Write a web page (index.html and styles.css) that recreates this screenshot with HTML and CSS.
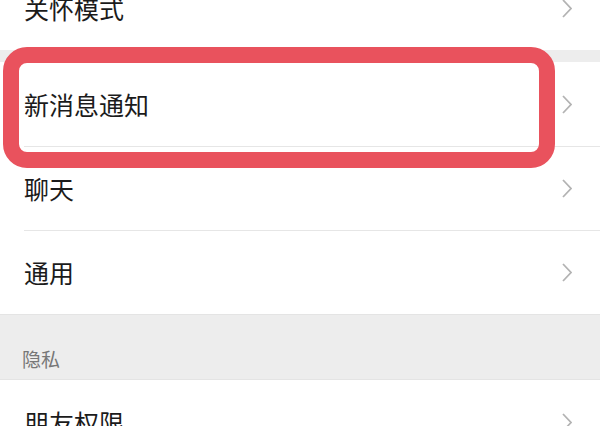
FILE: index.html
```html
<!DOCTYPE html>
<html lang="zh-CN">
<head>
    <meta charset="UTF-8">
    <meta name="viewport" content="width=device-width, initial-scale=1.0">
    <title>设置</title>
    <link rel="stylesheet" href="styles.css">
</head>
<body>
    <div class="page">
        <div class="group">
            <div class="row">
                <span class="label">关怀模式</span>
                <svg class="arrow" viewBox="0 0 10 19"><polyline points="1,1 9,9.5 1,18"/></svg>
            </div>
        </div>

        <div class="gap"></div>

        <div class="group">
            <div class="row">
                <span class="label">新消息通知</span>
                <svg class="arrow" viewBox="0 0 10 19"><polyline points="1,1 9,9.5 1,18"/></svg>
            </div>
            <div class="row line">
                <span class="label">聊天</span>
                <svg class="arrow" viewBox="0 0 10 19"><polyline points="1,1 9,9.5 1,18"/></svg>
            </div>
            <div class="row line">
                <span class="label">通用</span>
                <svg class="arrow" viewBox="0 0 10 19"><polyline points="1,1 9,9.5 1,18"/></svg>
            </div>
        </div>

        <div class="section-title">隐私</div>

        <div class="group">
            <div class="row">
                <span class="label">朋友权限</span>
                <svg class="arrow" viewBox="0 0 10 19"><polyline points="1,1 9,9.5 1,18"/></svg>
            </div>
        </div>

        <!-- marca roja sobre "新消息通知" -->
        <div class="highlight"></div>
    </div>
</body>
</html>
```

FILE: styles.css
```css
body {
    margin: 0;
    padding: 0;
    background-color: #ffffff;
    font-family: "Noto Sans CJK SC", "Noto Sans", sans-serif;
    overflow: hidden;
}

.page {
    position: relative;
    margin-top: -34px;
}

.group {
    background-color: #ffffff;
}

.row {
    height: 84px;
    display: flex;
    justify-content: space-between;
    align-items: center;
    padding: 0 28px 0 24px;
    position: relative;
}

.row.line::before {
    content: "";
    position: absolute;
    top: 0;
    left: 24px;
    right: 0;
    border-top: 1px solid #e6e6e6;
}

.label {
    font-size: 25px;
    color: #1b1b1b;
    line-height: 1;
}

.arrow {
    width: 10px;
    height: 19px;
    fill: none;
    stroke: #b3b3b3;
    stroke-width: 1.8;
}

.gap {
    height: 12px;
    background-color: #ededed;
}

.section-title {
    height: 66px;
    box-sizing: border-box;
    background-color: #ededed;
    border-top: 1px solid #e4e4e4;
    border-bottom: 1px solid #e4e4e4;
    padding: 34px 0 0 22px;
    font-size: 19px;
    line-height: 1;
    color: #777777;
}

.highlight {
    position: absolute;
    left: 3px;
    top: 81px;
    width: 552px;
    height: 121px;
    box-sizing: border-box;
    border: 16px solid #e9525d;
    border-radius: 24px;
}
```
